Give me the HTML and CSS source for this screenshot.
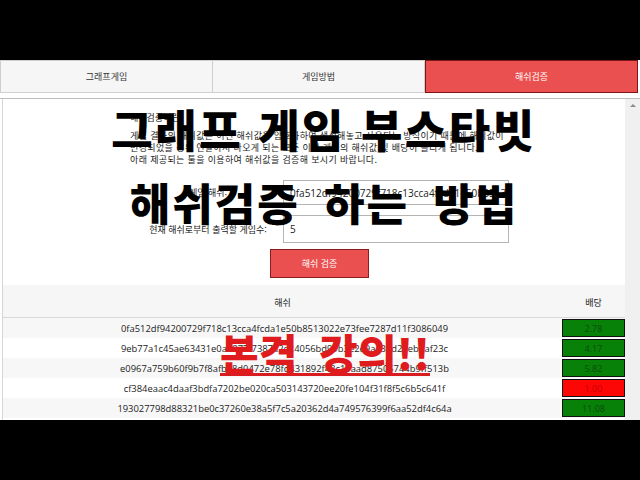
FILE: index.html
```html
<!DOCTYPE html>
<html lang="ko">
<head>
<meta charset="utf-8">
<title>해쉬검증</title>
<link rel="stylesheet" href="styles.css">
</head>
<body>
<div class="screen">
  <nav class="tabs">
    <div class="tab">그래프게임</div>
    <div class="tab">게임방법</div>
    <div class="tab active">해쉬검증</div>
  </nav>
  <div class="panel">
    <div class="content">
      <section class="intro">
        <h2 class="intro-title">해쉬검증이란</h2>
        <p class="intro-text">게임 결과의 해쉬값은 이전 해쉬값을 암호화하여 생성해놓고 사용되는 방식이기 때문에 해쉬값이<br>변경되었을 경우 연달아서 나오게 되는 모든 이전 게임의 해쉬값 및 배당이 틀리게 됩니다.<br>아래 제공되는 툴을 이용하여 해쉬값을 검증해 보시기 바랍니다.</p>
      </section>
      <div class="verify">
        <div class="field">
          <span class="label">게임 해쉬:</span>
          <div class="input">0fa512df94200729f718c13cca4fcda1e50b8513022e73fee7287d11f3086049</div>
        </div>
        <div class="field">
          <span class="label">현재 해쉬로부터 출력할 게임수:</span>
          <div class="input tall">5</div>
        </div>
        <div class="btn-row"><div class="btn">해쉬 검증</div></div>
      </div>
      <div class="table">
        <div class="thead">
          <div class="th">해쉬</div>
          <div class="th">배당</div>
        </div>
        <div class="trow odd"><div class="hash">0fa512df94200729f718c13cca4fcda1e50b8513022e73fee7287d11f3086049</div><div class="pay win">2.78</div></div>
        <div class="trow"><div class="hash">9eb77a1c45ae63431e0a4877f7387a2e24056bd99b3e2e9aa30d23ebbaf23c</div><div class="pay win">4.17</div></div>
        <div class="trow odd"><div class="hash">e0967a759b60f9b7f8afba8d0472e78fd431892f48c19aad87505744b9ff513b</div><div class="pay win">5.82</div></div>
        <div class="trow"><div class="hash">cf384eaac4daaf3bdfa7202be020ca503143720ee20fe104f31f8f5c6b5c641f</div><div class="pay lose">1.00</div></div>
        <div class="trow odd"><div class="hash">193027798d88321be0c37260e38a5f7c5a20362d4a749576399f6aa52df4c64a</div><div class="pay win">11.08</div></div>
      </div>
    </div>
    <div class="scrollbar"><span class="arrow"></span></div>
  </div>
  <div class="headline line1">그래프 게임 부스타빗</div>
  <div class="headline line2">해쉬검증 하는 방법</div>
  <div class="callout"><span class="callout-text">본격 강의!!</span></div>
</div>
</body>
</html>
```
FILE: styles.css
```css
html, body {
  margin: 0;
  padding: 0;
  background: #000;
}
body {
  width: 640px;
  height: 480px;
  overflow: hidden;
  font-family: "Noto Sans CJK KR", "Noto Sans", sans-serif;
  color: #222;
}
.screen {
  position: relative;
  margin-top: 60px;
  width: 640px;
  height: 360px;
  background: #fff;
  overflow: hidden;
  display: flex;
  flex-direction: column;
}
.tabs {
  display: flex;
  height: 33px;
  padding-right: 2px;
}
.tab {
  flex: 1;
  display: flex;
  align-items: center;
  justify-content: center;
  background: #f6f6f6;
  border: 1px solid #cfcfcf;
  border-left: none;
  font-size: 9px;
  color: #333;
}
.tab:first-child {
  border-left: 1px solid #cfcfcf;
}
.tab.active {
  background: #e9504f;
  border: 1px solid #7d1515;
  color: #fff;
}
.panel {
  margin-top: 5px;
  flex: 1;
  display: flex;
  border-top: 1px solid #bcbcbc;
}
.content {
  flex: 1;
  border-left: 1px solid #d6d6d6;
  margin-left: 2px;
  display: flex;
  flex-direction: column;
}
.intro {
  padding: 12px 0 0 127px;
}
.intro-title {
  margin: 0;
  font-size: 9px;
  font-weight: normal;
  line-height: 14px;
  color: #222;
}
.intro-text {
  margin: 5px 0 0;
  font-size: 9px;
  line-height: 12px;
  letter-spacing: 0.35px;
  color: #222;
}
.verify {
  margin-top: 14px;
  display: flex;
  flex-direction: column;
  gap: 10px;
}
.field {
  display: grid;
  grid-template-columns: 280px 226px;
  align-items: center;
}
.label {
  text-align: center;
  padding-left: 130px;
  font-size: 9px;
  color: #222;
}
.input {
  height: 25px;
  box-sizing: border-box;
  border: 1px solid #b5b5b5;
  padding: 0 6px;
  display: flex;
  align-items: center;
  font-family: "Open Sans", "Noto Sans", sans-serif;
  font-size: 10px;
  color: #222;
  white-space: nowrap;
  overflow: hidden;
}
.input.tall {
  height: 28px;
}
.btn-row {
  display: flex;
  padding-left: 267px;
  margin-top: -4px;
}
.btn {
  width: 99px;
  height: 29px;
  box-sizing: border-box;
  background: #e9504f;
  border: 1px solid #8a1e1e;
  color: #fff;
  font-size: 9px;
  display: flex;
  align-items: center;
  justify-content: center;
}
.table {
  margin-top: 7px;
  display: flex;
  flex-direction: column;
}
.thead {
  display: grid;
  grid-template-columns: 1fr 63px;
  height: 32px;
  background: #f6f6f6;
  border-bottom: 1px solid #d8d8d8;
  align-items: center;
  font-size: 9px;
  color: #222;
}
.th {
  text-align: center;
  padding-top: 3px;
}
.trow {
  display: grid;
  grid-template-columns: 1fr 63px;
  height: 20px;
  align-items: center;
  background: #fff;
}
.trow.odd {
  background: #f7f7f7;
}
.hash {
  text-align: center;
  font-family: "Open Sans", "Noto Sans", sans-serif;
  font-size: 9.4px;
  color: #222;
  padding-left: 4px;
}
.pay {
  height: 18px;
  box-sizing: border-box;
  border: 1px solid #111;
  font-family: "Open Sans", sans-serif;
  font-size: 9px;
  display: flex;
  align-items: center;
  justify-content: center;
}
.pay.win {
  background: #078107;
  color: #0a4d0a;
}
.pay.lose {
  background: #fc0606;
  color: #c00;
}
.scrollbar {
  width: 15px;
  background: #f0f0f0;
  display: flex;
  justify-content: center;
  padding-top: 5px;
}
.arrow {
  width: 0;
  height: 0;
  border-left: 3px solid transparent;
  border-right: 3px solid transparent;
  border-bottom: 3px solid #8a8a8a;
}
.headline {
  position: absolute;
  left: 8px;
  right: 0;
  text-align: center;
  font-family: "Noto Sans CJK KR", sans-serif;
  font-weight: 900;
  color: #000;
  line-height: 1;
  white-space: nowrap;
}
.line1 {
  top: 46px;
  font-size: 45px;
  letter-spacing: 2.5px;
}
.line2 {
  top: 120px;
  font-size: 44px;
  letter-spacing: 2px;
  word-spacing: 10px;
}
.callout {
  position: absolute;
  left: 10px;
  right: 0;
  top: 271px;
  text-align: center;
}
.callout-text {
  display: inline-block;
  font-family: "Noto Sans CJK KR", sans-serif;
  font-weight: 900;
  font-size: 42px;
  line-height: 1;
  color: #e01b1e;
  word-spacing: 10px;
  padding-bottom: 0;
  border-bottom: 3px solid #d81c1f;
}
```
